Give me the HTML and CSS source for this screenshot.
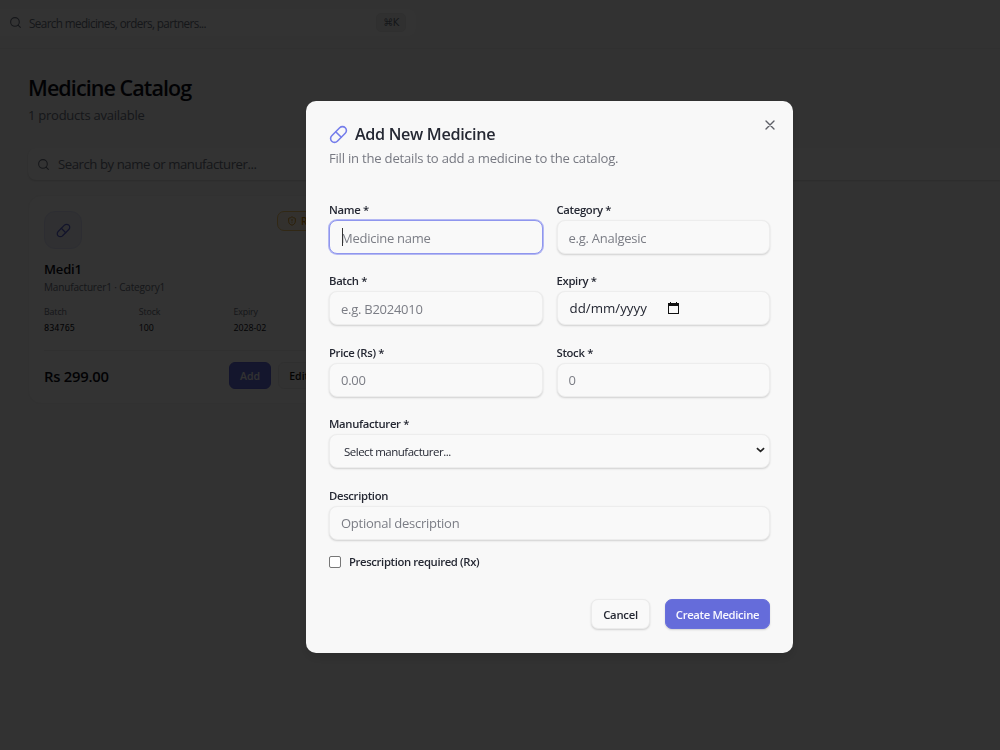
FILE: index.html
```html
<!DOCTYPE html>
<html lang="en">
<head>
  <meta charset="UTF-8">
  <meta name="viewport" content="width=device-width, initial-scale=1.0">
  <title>Medicine Catalog</title>
  <link rel="stylesheet" href="styles.css">
</head>
<body>
  <svg class="sprite">
    <symbol id="icon-search" viewBox="0 0 24 24"><circle cx="11" cy="11" r="8"/><path d="m21 21-4.3-4.3"/></symbol>
    <symbol id="icon-pill" viewBox="0 0 24 24"><path d="m10.5 20.5 10-10a4.95 4.95 0 1 0-7-7l-10 10a4.95 4.95 0 1 0 7 7Z"/><path d="m8.5 8.5 7 7"/></symbol>
    <symbol id="icon-alert" viewBox="0 0 24 24"><path d="M20 13c0 5-3.5 7.5-7.7 9a1 1 0 0 1-.6 0C7.5 20.500 4 18 4 13V6a1 1 0 0 1 1-1c2 0 4.500-1.200 6.200-2.700a1.200 1.200 0 0 1 1.600 0C14.500 3.800 17 5 19 5a1 1 0 0 1 1 1z"/><path d="M12 8v4M12 16h.01"/></symbol>
    <symbol id="icon-close" viewBox="0 0 24 24"><path d="M18 6 6 18M6 6l12 12"/></symbol>
  </svg>

  <div class="page">
    <header class="topbar">
      <div class="topbar-search">
        <svg class="icon"><use href="#icon-search"/></svg>
        <span class="topbar-text">Search medicines, orders, partners...</span>
        <kbd>⌘K</kbd>
      </div>
    </header>
    <main class="catalog">
      <h1>Medicine Catalog</h1>
      <p class="count">1 products available</p>
      <div class="filter">
        <svg class="icon"><use href="#icon-search"/></svg>
        <span>Search by name or manufacturer...</span>
      </div>
      <article class="card">
        <div class="card-top">
          <div class="card-icon"><svg class="icon"><use href="#icon-pill"/></svg></div>
          <span class="badge"><svg class="icon"><use href="#icon-alert"/></svg>Rx</span>
        </div>
        <h2>Medi1</h2>
        <p class="maker">Manufacturer1 · Category1</p>
        <dl class="facts">
          <div><dt>Batch</dt><dd class="mono">834765</dd></div>
          <div><dt>Stock</dt><dd>100</dd></div>
          <div><dt>Expiry</dt><dd>2028-02</dd></div>
        </dl>
        <div class="card-bottom">
          <strong class="price">Rs 299.00</strong>
          <button class="card-btn card-btn-add">Add</button>
          <button class="card-btn">Edit</button>
        </div>
      </article>
    </main>
  </div>

  <div class="overlay">
    <div class="modal" role="dialog">
      <button class="close" type="button" aria-label="Close"><svg class="icon"><use href="#icon-close"/></svg></button>
      <div class="modal-title">
        <svg class="icon"><use href="#icon-pill"/></svg>
        <h2>Add New Medicine</h2>
      </div>
      <p class="modal-desc">Fill in the details to add a medicine to the catalog.</p>
      <form class="form">
        <div class="field">
          <label for="name">Name *</label>
          <div class="control active"><input id="name" type="text" placeholder="Medicine name"></div>
        </div>
        <div class="field">
          <label for="category">Category *</label>
          <div class="control"><input id="category" type="text" placeholder="e.g. Analgesic"></div>
        </div>
        <div class="field">
          <label for="batch">Batch *</label>
          <div class="control"><input id="batch" type="text" placeholder="e.g. B2024010"></div>
        </div>
        <div class="field">
          <label>Expiry *</label>
          <div class="control date">
            <span>dd/mm/yyyy</span>
            <svg class="calendar" viewBox="0 0 11 12"><path fill="#111" d="M0 1h2V0h1v1h5V0h1v1h2v11H0zM1 4v7h9V4z"/></svg>
          </div>
        </div>
        <div class="field">
          <label for="price">Price (Rs) *</label>
          <div class="control"><input id="price" type="text" placeholder="0.00"></div>
        </div>
        <div class="field">
          <label for="stock">Stock *</label>
          <div class="control"><input id="stock" type="text" placeholder="0"></div>
        </div>
        <div class="field wide">
          <label>Manufacturer *</label>
          <div class="control select">
            <span>Select manufacturer...</span>
            <svg class="chevron" viewBox="0 0 10 6"><path d="m1 1 4 3.600L9 1"/></svg>
          </div>
        </div>
        <div class="field wide">
          <label for="description">Description</label>
          <div class="control"><input id="description" type="text" placeholder="Optional description"></div>
        </div>
        <label class="check"><input type="checkbox"><span>Prescription required (Rx)</span></label>
        <div class="actions">
          <button class="btn" type="button">Cancel</button>
          <button class="btn btn-primary" type="button">Create Medicine</button>
        </div>
      </form>
    </div>
  </div>
</body>
</html>
```
FILE: styles.css
```css
* {
  box-sizing: border-box;
}
body {
  margin: 0;
  height: 750px;
  overflow: hidden;
  background: #f8f8f8;
  color: #0c0e16;
  font-family: "Open Sans", "Noto Sans", sans-serif;
}
h1, h2, p, dl, dd {
  margin: 0;
}
button, input {
  font-family: inherit;
}
.sprite {
  display: none;
}
.icon {
  flex: none;
  fill: none;
  stroke: currentColor;
  stroke-width: 2;
  stroke-linecap: round;
  stroke-linejoin: round;
}

/* page behind the dialog */
.topbar {
  height: 49px;
  padding-top: 9px;
  border-bottom: 1px solid #f0f0f0;
}
.topbar-search {
  display: flex;
  align-items: center;
  width: 416px;
  height: 27px;
  padding: 0 10px 0 9px;
  border-radius: 0 8px 8px 0;
  background: #fdfdfd;
  color: #6b7280;
  font-size: 11.7px;
}
.topbar-search .icon {
  width: 13px;
  height: 13px;
}
.topbar-text {
  flex: 1;
  margin-left: 7px;
  padding-top: 1px;
  letter-spacing: -0.6px;
}
kbd {
  width: 30px;
  height: 19px;
  border: 1px solid #eaeaea;
  border-radius: 5px;
  background: #f1f1f1;
  font: 10px/17px "DejaVu Sans", sans-serif;
  letter-spacing: -0.5px;
  text-align: center;
}
.catalog {
  padding: 25px 0 0 28px;
}
h1 {
  font-size: 21.5px;
  font-weight: 600;
  line-height: 28px;
  letter-spacing: -0.92px;
}
.count {
  margin-top: 3px;
  color: #6b7280;
  font-size: 13px;
  line-height: 20px;
  letter-spacing: -0.25px;
}
.filter {
  display: flex;
  align-items: center;
  gap: 8px;
  height: 32px;
  margin-top: 23px;
  padding-left: 9px;
  border-radius: 8px 0 0 8px;
  background: #fdfdfd;
  box-shadow: 0 1px 2px rgba(0,0,0,0.14);
  color: #6b7280;
  font-size: 13.2px;
  letter-spacing: -0.46px;
}
.filter .icon {
  width: 13px;
  height: 13px;
}
.card {
  width: 312px;
  height: 209px;
  margin-top: 15px;
  padding: 15px;
  border: 1px solid #f2f2f2;
  border-radius: 13px;
  background: #fcfcfc;
}
.card-top {
  display: flex;
  justify-content: space-between;
  align-items: flex-start;
}
.card-icon {
  display: grid;
  place-items: center;
  width: 38px;
  height: 38px;
  border: 1px solid #e1e2f7;
  border-radius: 11px;
  background: #eeeefa;
  color: #5b63d3;
}
.card-icon .icon {
  width: 15px;
  height: 15px;
}
.badge {
  display: flex;
  align-items: center;
  gap: 4px;
  width: 47px;
  height: 20px;
  padding-left: 9px;
  border: 1px solid #f2c66a;
  border-radius: 7px;
  background: #fdf5e4;
  color: #d08700;
  font-size: 10px;
  font-weight: 600;
}
.badge .icon {
  width: 10px;
  height: 10px;
}
.card h2 {
  margin-top: 10px;
  font-size: 13px;
  font-weight: 600;
  line-height: 20px;
  letter-spacing: -0.15px;
}
.maker {
  color: #6b7280;
  font-size: 10px;
  line-height: 16px;
  letter-spacing: -0.15px;
}
.facts {
  display: grid;
  grid-template-columns: repeat(3, 94.7px);
  margin-top: 10px;
  font-size: 8.800px;
  line-height: 14px;
}
.facts dt {
  color: #6b7280;
  letter-spacing: -0.1px;
}
.facts dd {
  line-height: 18px;
}
.facts .mono {
  font-family: "DejaVu Sans Mono", monospace;
  font-size: 8.600px;
}
.card-bottom {
  display: flex;
  align-items: center;
  gap: 7px;
  margin-top: 13px;
  padding-top: 11px;
  border-top: 1px solid #eeeeee;
}
.price {
  width: 178px;
  font-size: 14.800px;
  font-weight: 600;
  letter-spacing: -0.25px;
}
.card-btn {
  flex: none;
  width: 42px;
  height: 27px;
  padding: 0;
  border: 1px solid #ececec;
  border-radius: 6px;
  background: #fafafa;
  color: #111;
  font-size: 10.500px;
  font-weight: 600;
}
.card-btn-add {
  border-color: #5f67dc;
  background: #666ee0;
  color: #f7f7f7;
}

/* dialog */
.overlay {
  position: fixed;
  inset: 0;
  padding: 101px 0 0 306px;
  background: rgba(0,0,0,0.8);
}
.modal {
  position: relative;
  width: 487px;
  height: 551.500px;
  padding: 24px 23px;
  border-radius: 10px;
  background: #f8f8f8;
  box-shadow: 0 5px 12px rgba(0,0,0,0.12);
  color: #252833;
}
.close {
  position: absolute;
  top: 16px;
  right: 15px;
  width: 16px;
  height: 16px;
  padding: 0;
  border: 0;
  background: none;
  color: #5d5f66;
}
.close .icon {
  display: block;
  width: 16px;
  height: 16px;
}
.modal-title {
  display: flex;
  align-items: center;
  gap: 7px;
  height: 18px;
}
.modal-title .icon {
  width: 19px;
  height: 19px;
  color: #757deb;
}
.modal-title h2 {
  font-size: 16.200px;
  font-weight: 600;
  letter-spacing: -0.33px;
}
.modal-desc {
  margin-top: 5px;
  color: #777982;
  font-size: 13.100px;
  line-height: 20px;
  letter-spacing: -0.22px;
}
.form {
  display: grid;
  grid-template-columns: 1fr 1fr;
  column-gap: 14px;
  row-gap: 20.400px;
  margin-top: 35px;
}
.field label {
  display: block;
  height: 17px;
  font-size: 11.300px;
  font-weight: 600;
  line-height: 13px;
  letter-spacing: -0.32px;
}
.wide, .check, .actions {
  grid-column: 1 / -1;
}
.control {
  position: relative;
  display: flex;
  align-items: center;
  height: 34px;
  padding: 0 11px;
  border: 1px solid #ededed;
  border-radius: 8px;
  background: #f9f9f9;
  box-shadow: 0 1px 2px rgba(0,0,0,0.16);
  font-size: 13px;
}
.control input {
  width: 100%;
  padding: 1px 0 0;
  border: 0;
  outline: 0;
  background: none;
  font-size: 13px;
  letter-spacing: -0.26px;
}
.control input::placeholder {
  color: #7b7d85;
}
.active {
  border-color: #8f96ee;
  box-shadow: 0 0 0 1px #b4b8f3;
}
/* text cursor of the focused field */
.active::before {
  content: "";
  position: absolute;
  left: 12px;
  width: 1px;
  height: 18px;
  background: #333;
}
.control.date {
  gap: 21px;
  padding-left: 12px;
}
.date span {
  font-size: 13.300px;
}
.calendar {
  width: 11px;
  height: 12px;
}
.control.select {
  justify-content: space-between;
  padding: 1px 4px 0 14px;
  font-size: 11.500px;
  letter-spacing: -0.5px;
}
.chevron {
  width: 9px;
  height: 6px;
  margin-top: -3px;
  fill: none;
  stroke: #222;
  stroke-width: 1.800;
}
.check {
  display: flex;
  align-items: center;
  gap: 8px;
  height: 14px;
  margin-top: -5px;
  font-size: 11.300px;
  font-weight: 600;
  letter-spacing: -0.37px;
}
.check input {
  appearance: none;
  width: 12px;
  height: 12px;
  margin: 0;
  border: 1px solid #777;
  border-radius: 2px;
  background: #fff;
}
.actions {
  display: flex;
  justify-content: flex-end;
  gap: 15px;
  margin-top: 10px;
}
.btn {
  width: 59px;
  height: 30px;
  padding: 1px 0 0;
  border: 1px solid #ebebeb;
  border-radius: 7px;
  background: #f9f9f9;
  box-shadow: 0 1px 2px rgba(0,0,0,0.16);
  color: #252833;
  font-size: 11.300px;
  font-weight: 600;
  letter-spacing: -0.27px;
}
.btn-primary {
  width: 105px;
  border-color: #6970db;
  background: #656cda;
  color: #f8f8ff;
  letter-spacing: -0.35px;
}
```
